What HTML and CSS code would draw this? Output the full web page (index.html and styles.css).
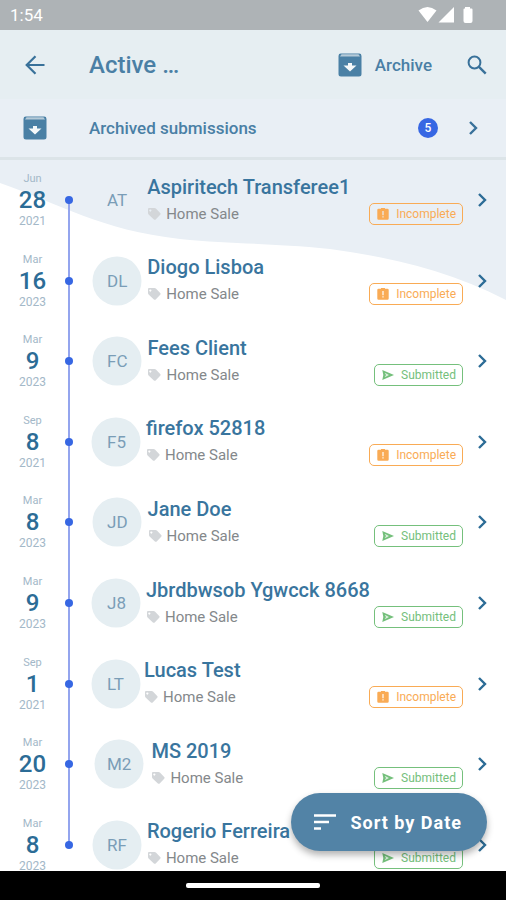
FILE: index.html
```html
<!DOCTYPE html>
<html lang="en">
<head>
<meta charset="utf-8">
<meta name="viewport" content="width=device-width, initial-scale=1">
<title>Active submissions</title>
<link rel="stylesheet" href="styles.css">
</head>
<body>
<svg class="sprite" aria-hidden="true">
  <symbol id="chevron" viewBox="0 0 10 16"><path d="M2 2l6 6-6 6" fill="none" stroke="currentColor" stroke-width="2.4"/></symbol>
  <symbol id="archive" viewBox="0 0 24 24"><path fill="currentColor" d="M3 .6h18A2.4 2.4 0 0 1 23.500 3v18a2.500 2.500 0 0 1-2.500 2.500H3A2.500 2.500 0 0 1 .5 21V3A2.400 2.400 0 0 1 3 .6z"/><path fill="#b5cad8" d="M3.500 1.200h17l1.500 2.300H2z"/><path fill="#f4f8fa" d="M10 10h4v2.500h4.500L12 18.500l-6.500-6H10z"/></symbol>
  <symbol id="tag" viewBox="0 0 14 14"><path fill="currentColor" fill-rule="evenodd" d="M2 1h5.500q.8 0 1.400.6l4.300 4.300q.9.9 0 1.800l-4.500 4.700q-.9.900-1.800 0L1.600 7.500Q1 6.900 1 6V2q0-1 1-1zm1.300 1.500a1 1 0 1 0 .1 0z"/></symbol>
  <symbol id="warn" viewBox="0 0 12 12"><path fill="currentColor" fill-rule="evenodd" d="M1.500 .8H4a2 2 0 0 1 4 0h2.500q1.200 0 1.200 1.200v8.500q0 1.200-1.200 1.200h-9q-1.200 0-1.200-1.200V2q0-1.200 1.200-1.200zM5.400 3v4.200h1.200V3zm0 5.200v1.300h1.200V8.200z"/></symbol>
  <symbol id="send" viewBox="0 0 12 12"><path fill="currentColor" fill-rule="evenodd" d="M.3 1L12 6 .3 11 1.300 6zM2.700 4L4 5.700H7zM2.700 8L4 6.300H7z"/></symbol>
</svg>
<div class="screen">
  <div class="status">
    <span>1:54</span>
    <svg class="signals" viewBox="0 0 56 18" aria-hidden="true"><g fill="#fff"><path d="M.5 4.500Q9.500-2.500 18.500 4.500L9.500 16z"/><path d="M36 1v15.500H20.500z"/><path d="M47 1h5v1.500h1.500q1 0 1 1V15q0 2-2 2h-5q-2 0-2-2V3.500q0-1 1-1H47z"/></g></svg>
  </div>
  <header class="bar">
    <button class="icon-btn lead" aria-label="Back"><svg class="i-back" viewBox="0 0 20 20"><path d="M19.500 10H2M10.500 1.200L1.700 10l8.800 8.800" fill="none" stroke="currentColor" stroke-width="2.200"/></svg></button>
    <h1>Active …</h1>
    <button class="archive-btn"><svg class="i-archive"><use href="#archive"/></svg>Archive</button>
    <button class="icon-btn" aria-label="Search"><svg class="i-search" viewBox="0 0 20 20"><g fill="none" stroke="currentColor"><circle cx="7.500" cy="7.500" r="5.900" stroke-width="2"/><path d="M11.700 11.700l7 7" stroke-width="2.400"/></g></svg></button>
  </header>
  <a class="archived" href="#archived">
    <span class="lead"><svg class="i-archive"><use href="#archive"/></svg></span>
    <span class="archived-label">Archived submissions</span>
    <span class="count">5</span>
    <svg class="i-chevron"><use href="#chevron"/></svg>
  </a>
  <main>
    <svg class="wave" viewBox="0 0 506 140" preserveAspectRatio="none" aria-hidden="true"><path fill="#e9eff5" d="M0 0H506V140C450 111 390 97 330 89C270 83 230 84 180 79C100 70 60 44 0 23z"/></svg>
    <ul class="list" id="list"></ul>
    <button class="sort"><svg class="i-sort" viewBox="0 0 24 18" aria-hidden="true"><path d="M1 2.500h22M1 9h15M1 15.500h7" fill="none" stroke="#fff" stroke-width="2.600"/></svg>Sort by Date</button>
  </main>
  <footer><span class="handle"></span></footer>
</div>
<script src="app.js"></script>
</body>
</html>
```
FILE: styles.css
```css
* { box-sizing: border-box; }
body {
  margin: 0;
  font-family: Roboto, "Liberation Sans", sans-serif;
  color: #39719a;
  background: #fff;
}
button { border: 0; padding: 0; background: none; font: inherit; color: inherit; cursor: pointer; }
a { color: inherit; text-decoration: none; }
svg { display: block; flex: none; }
.sprite { position: absolute; width: 0; height: 0; }
.screen { display: flex; flex-direction: column; height: 100vh; }

.status {
  display: flex;
  justify-content: space-between;
  align-items: center;
  height: 30px;
  padding: 0 32px 0 10px;
  background: #aeb3b6;
  color: #fff;
  font-size: 17px;
}
.signals { width: 56px; height: 18px; }

.bar, .archived { display: flex; align-items: center; padding-right: 19px; }
.bar { height: 69px; background: #e6eef2; }
.archived {
  height: 61px;
  background: #e9eff5;
  border-bottom: 3px solid #dce4e8;
  padding-right: 28px;
}
.lead { width: 70px; margin-right: 19px; display: flex; justify-content: center; flex: none; }
.bar h1 { flex: 1; margin: 0; font-size: 24px; font-weight: 500; color: #4a7fa5; }
.archive-btn { display: flex; align-items: center; gap: 13px; margin-right: 35px; font-size: 17px; font-weight: 500; color: #4a7fa5; }
.i-archive { width: 24px; height: 24px; color: #4a80a5; }
.i-back { width: 20px; height: 20px; }
.i-search { width: 20px; height: 20px; }
.i-chevron { width: 10px; height: 16px; }
.archived-label { flex: 1; font-size: 17px; font-weight: 500; color: #4a7fa5; }
.count {
  width: 20px;
  height: 20px;
  margin-right: 30px;
  border-radius: 50%;
  background: #3767e3;
  color: #fff;
  font-size: 12px;
  font-weight: 500;
  line-height: 20px;
  text-align: center;
}

main { position: relative; flex: 1; min-height: 0; overflow: hidden; }
.wave { position: absolute; top: 0; left: 0; width: 100%; height: 140px; }
.list {
  position: relative;
  display: grid;
  grid-auto-rows: 1fr;
  height: calc(100% + 14px);
  margin: 0;
  padding: 0;
  list-style: none;
}
.row { display: flex; align-items: stretch; padding-right: 19px; }
.date {
  width: 65px;
  display: flex;
  flex-direction: column;
  align-items: center;
  justify-content: center;
  font-size: 11px;
  line-height: 14px;
  color: #a3b8c8;
}
.date strong { font-size: 24px; font-weight: 500; line-height: 28px; color: #2c6c96; }
.date .year { font-size: 12px; }
.track { width: 7px; display: grid; place-items: center; position: relative; }
.track::before {
  content: "";
  position: absolute;
  top: 0;
  bottom: 0;
  left: 3px;
  width: 2px;
  background: #94a5ee;
}
.row:first-child .track::before { top: 50%; }
.row:last-child .track::before { bottom: 50%; }
.dot { position: relative; width: 8px; height: 8px; border-radius: 50%; background: #3767e3; }
.link { flex: 1; min-width: 0; display: flex; align-items: center; padding-left: 35px; }
.initials { position: relative; margin-right: 20px; font-size: 17px; color: #7a9db7; }
.initials::before {
  content: "";
  position: absolute;
  z-index: -1;
  top: 50%;
  left: 50%;
  width: 49px;
  height: 49px;
  border-radius: 50%;
  background: #e5eef2;
  transform: translate(-50%, -50%);
}
.info { flex: 1; min-width: 0; padding-top: 3px; }
.name { display: block; font-size: 20px; font-weight: 500; line-height: 24px; white-space: nowrap; color: #39759e; }
.meta { display: flex; align-items: center; justify-content: space-between; height: 30px; }
.kind { display: flex; align-items: center; gap: 5px; font-size: 15px; color: #84888b; }
.kind svg { width: 14px; height: 14px; color: #d3d6d9; }
.badge {
  display: flex;
  align-items: center;
  gap: 7px;
  height: 22px;
  padding: 0 6px 0 7px;
  border: 1px solid;
  border-radius: 5px;
  font-size: 12px;
}
.badge svg { width: 12px; height: 12px; }
.incomplete { color: #f9ab55; }
.submitted { color: #75c07c; }
.link > .i-chevron { margin-left: 14px; color: #2c6c96; }

.sort {
  position: absolute;
  right: 19px;
  bottom: 20px;
  display: flex;
  align-items: center;
  gap: 13px;
  height: 58px;
  padding: 0 25px 0 22px;
  border-radius: 29px;
  background: #5283a6;
  color: #fff;
  font-size: 18px;
  font-weight: 700;
  letter-spacing: 1px;
  box-shadow: 0 4px 7px rgba(0, 0, 0, 0.3);
}
.i-sort { width: 24px; height: 18px; }
footer { display: flex; align-items: center; justify-content: center; height: 29px; background: #000; }
.handle { width: 134px; height: 5px; border-radius: 2px; background: #fff; }
```
FILE: app.js
```js
const rows = [
  ["Jun", 28, 2021, "AT", "Aspiritech Transferee1", "Incomplete"],
  ["Mar", 16, 2023, "DL", "Diogo Lisboa", "Incomplete"],
  ["Mar", 9, 2023, "FC", "Fees Client", "Submitted"],
  ["Sep", 8, 2021, "F5", "firefox 52818", "Incomplete"],
  ["Mar", 8, 2023, "JD", "Jane Doe", "Submitted"],
  ["Mar", 9, 2023, "J8", "Jbrdbwsob Ygwcck 8668", "Submitted"],
  ["Sep", 1, 2021, "LT", "Lucas Test", "Incomplete"],
  ["Mar", 20, 2023, "M2", "MS 2019", "Submitted"],
  ["Mar", 8, 2023, "RF", "Rogerio Ferreira", "Submitted"]
];
document.getElementById("list").innerHTML = rows.map(([month, day, year, initials, name, state]) => `
  <li class="row">
    <div class="date"><span>${month}</span><strong>${day}</strong><span class="year">${year}</span></div>
    <div class="track"><span class="dot"></span></div>
    <a class="link" href="#submission">
      <span class="initials">${initials}</span>
      <span class="info">
        <span class="name">${name}</span>
        <span class="meta">
          <span class="kind"><svg><use href="#tag"/></svg>Home Sale</span>
          <span class="badge ${state.toLowerCase()}"><svg><use href="#${state === "Submitted" ? "send" : "warn"}"/></svg>${state}</span>
        </span>
      </span>
      <svg class="i-chevron"><use href="#chevron"/></svg>
    </a>
  </li>`).join("");
```
